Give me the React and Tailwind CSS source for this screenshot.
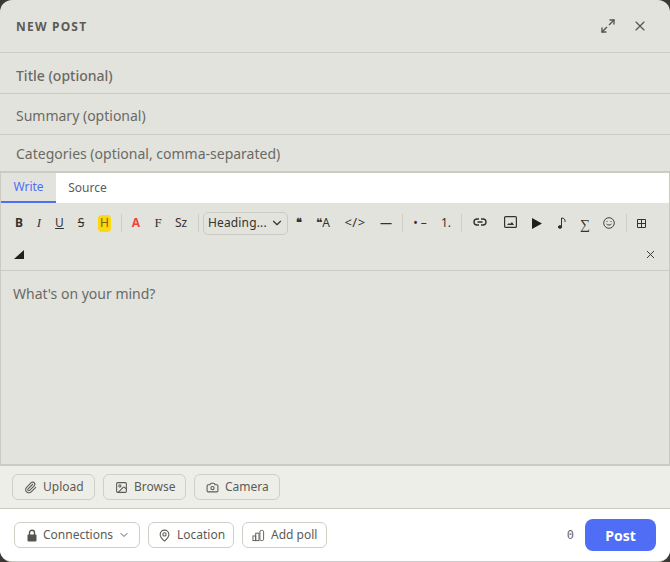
import { Maximize2, X, ChevronDown, Paperclip, Image, Camera, MapPin } from 'lucide-react'

const Sep = ({ className = '' }) => <span className={`w-px h-[18px] bg-[#cfcfc8] ${className}`} />

function Tool({ className = '', children }) {
  return <span className={`h-[24px] flex items-center justify-center text-[#33332f] ${className}`}>{children}</span>
}

function GhostButton({ className = '', children }) {
  return (
    <span className={`h-[26px] flex items-center gap-[6px] rounded-[6px] border border-[#cfcfc8] text-[12px] text-[#5c5c56] ${className}`}>
      {children}
    </span>
  )
}

export default function App() {
  return (
    <div className="w-[670px] h-[562px] bg-[#3b3733] overflow-hidden font-['Noto_Sans',sans-serif]">
      <div className="h-full flex flex-col rounded-[12px] overflow-hidden bg-[#e3e3de] border-b border-[#cbcbc4]">
        <div className="h-[53px] shrink-0 pl-4 pr-[22px] flex items-center justify-between border-b border-[#cbcbc4]">
          <span className="pt-[1px] text-[12px] font-bold tracking-[1.2px] text-[#5c5c56]">NEW POST</span>
          <div className="flex items-center gap-[16px] text-[#55554f]">
            <Maximize2 size={16} strokeWidth={2} />
            <X size={16} strokeWidth={1.75} />
          </div>
        </div>
        <div className="h-[41px] shrink-0 px-4 pt-[4px] flex items-center text-[14px] font-medium text-[#6a6a64] border-b border-[#cbcbc4]">Title (optional)</div>
        <div className="h-[41px] shrink-0 px-4 pt-[2px] flex items-center text-[14px] text-[#6a6a64] border-b border-[#cbcbc4]">Summary (optional)</div>
        <div className="h-[38px] shrink-0 px-4 pt-[1px] flex items-center text-[14px] text-[#6a6a64] border-b-2 border-[#cbcbc4]">
          Categories (optional, comma-separated)
        </div>

        <div className="flex-1 flex flex-col border-x border-[#cbcbc4] min-h-0">
          <div className="h-[30px] shrink-0 flex bg-white text-[12px]">
            <span className="w-[55px] flex items-center justify-center bg-[#e3e3de] text-[#4f6df5] border-b-2 border-[#4f6df5]">Write</span>
            <span className="w-[63px] flex items-center justify-center text-[#5c5c56]">Source</span>
          </div>

          <div className="h-[68px] shrink-0 pl-[8px] pr-[12px] border-b border-[#cbcbc4]">
            <div className="h-[40px] flex items-center text-[12px]">
              <Tool className="w-[20px] font-bold">B</Tool>
              <Tool className="w-[20px] text-[13px] italic font-['Liberation_Serif',serif]">I</Tool>
              <Tool className="w-[21px] underline">U</Tool>
              <Tool className="w-[22px] line-through">S</Tool>
              <Tool className="w-[21px] ml-[2px]">
                <span className="w-[13px] h-[17px] flex items-center justify-center rounded-[4px] bg-[#fbd80f] text-[#7c6200]">H</span>
              </Tool>
              <Sep className="ml-[6px]" />
              <Tool className="w-[28px] font-bold text-[#e8473f]">A</Tool>
              <Tool className="w-[16px] text-[13px] font-['Liberation_Serif',serif]">F</Tool>
              <Tool className="w-[30px]">Sz</Tool>
              <Sep className="ml-[2px]" />
              <span className="w-[85px] h-[23px] ml-[4px] pl-[4px] pr-[3px] flex items-center justify-between rounded-[5px] border border-[#cbcbc4] text-[12px] tracking-[0.15px] text-[#33332f]">
                Heading...
                <ChevronDown size={14} strokeWidth={2} />
              </span>
              <Tool className="w-[22px] font-bold text-[11px] mb-[2px]">❝</Tool>
              <Tool className="w-[26px]">❝A</Tool>
              <Tool className="w-[38px] text-[13px] tracking-[0.5px]">&lt;/&gt;</Tool>
              <Tool className="w-[24px] font-bold">—</Tool>
              <Sep className="ml-[4px]" />
              <Tool className="w-[34px]">• –</Tool>
              <Tool className="w-[18px]">1.</Tool>
              <Sep className="ml-[6px]" />
              <Tool className="w-[36px] mb-[2px]">
                <svg width="14" height="8" viewBox="0 0 14 8" fill="none" stroke="#33332f" strokeWidth="1.400">
                  <path d="M6 1H4a3 3 0 0 0 0 6h2M8 1h2a3 3 0 0 1 0 6H8M4.500 4h5" />
                </svg>
              </Tool>
              <Tool className="w-[24px] mb-[3px]">
                <svg width="13" height="12" viewBox="0 0 13 12" fill="none">
                  <rect x="0.600" y="0.600" width="11.800" height="10.800" rx="1" stroke="#33332f" strokeWidth="1.200" />
                  <path d="M3 9l2-2 1 1 2-2 2 3z" fill="#33332f" />
                </svg>
              </Tool>
              <Tool className="w-[30px]">
                <svg width="10" height="11" viewBox="0 0 10 11"><path d="M0 0l10 5.500-10 5.500z" fill="#1f1f1c" /></svg>
              </Tool>
              <Tool className="w-[20px]">
                <svg width="9" height="12" viewBox="0 0 9 12" fill="none" stroke="#33332f">
                  <path d="M3.500 10V1c2.500 0 4 1.500 3.500 4" />
                  <ellipse cx="2" cy="10" rx="1.700" ry="1.300" fill="#33332f" />
                </svg>
              </Tool>
              <Tool className="w-[26px] text-[14px] mt-[2px] font-['Liberation_Serif',serif]">∑</Tool>
              <Tool className="w-[22px]">
                <svg width="12" height="12" viewBox="0 0 12 12" fill="none" stroke="#33332f" strokeWidth="0.9">
                  <circle cx="6" cy="6" r="5.300" />
                  <path d="M3.500 7c.7 1.300 4.300 1.300 5 0" />
                  <path d="M4 4v1M8 4v1" />
                </svg>
              </Tool>
              <Sep className="ml-[6px]" />
              <Tool className="w-[28px]">
                <svg width="9" height="9" viewBox="0 0 9 9" fill="none" stroke="#33332f"><path d="M.5.500h8v8h-8zM4.500.500v8M.5 4.500h8" /></svg>
              </Tool>
            </div>
            <div className="h-[27px] flex items-center justify-between pb-[4px]">
              <svg width="10" height="9" viewBox="0 0 10 9" className="ml-[5px]"><path d="M10 0v9H0z" fill="#1f1f1c" /></svg>
              <X size={13} strokeWidth={1.75} className="text-[#33332f]" />
            </div>
          </div>

          <div className="flex-1 px-[12px] pt-[13px] text-[14px] leading-[20px] text-[#6a6a64]">What's on your mind?</div>
        </div>

        <div className="h-[45px] shrink-0 px-[12px] flex items-center gap-[8px] bg-[#eeeee9] border-t-2 border-b border-t-[#cbcbc4] border-b-[#cbcbc4]">
          <GhostButton className="w-[83px] pl-[11px]"><Paperclip size={13} />Upload</GhostButton>
          <GhostButton className="w-[83px] pl-[11px]"><Image size={13} />Browse</GhostButton>
          <GhostButton className="w-[86px] pl-[11px]"><Camera size={13} />Camera</GhostButton>
        </div>

        <div className="h-[52px] shrink-0 px-[14px] flex items-center bg-white">
          <div className="flex items-center gap-[8px]">
            <GhostButton className="w-[126px] pl-[12px]">
              <svg width="10" height="13" viewBox="0 0 10 13" fill="none">
                <path d="M2.500 6V3.800a2.500 2.500 0 0 1 5 0V6" stroke="#55554f" strokeWidth="1.400" />
                <rect x="0.500" y="5.500" width="9" height="7" rx="1" fill="#55554f" />
              </svg>
              Connections
              <ChevronDown size={12} className="ml-[-1px]" />
            </GhostButton>
            <GhostButton className="w-[86px] pl-[9px]"><MapPin size={13} />Location</GhostButton>
            <GhostButton className="w-[85px] pl-[9px]">
              <svg width="13" height="13" viewBox="0 0 14 13" fill="none" stroke="#5c5c56">
                <rect x="1" y="7" width="3" height="5" />
                <rect x="4" y="4" width="3.500" height="8" />
                <rect x="8.500" y="1" width="4" height="11" rx="1.500" />
              </svg>
              Add poll
            </GhostButton>
          </div>
          <span className="ml-auto mr-[11px] text-[12px] font-['DejaVu_Sans_Mono',monospace] text-[#6a6a64]">0</span>
          <span className="w-[71px] h-[32px] flex items-center justify-center rounded-[8px] bg-[#4f6df5] text-white text-[14px] font-bold">Post</span>
        </div>
      </div>
    </div>
  )
}
